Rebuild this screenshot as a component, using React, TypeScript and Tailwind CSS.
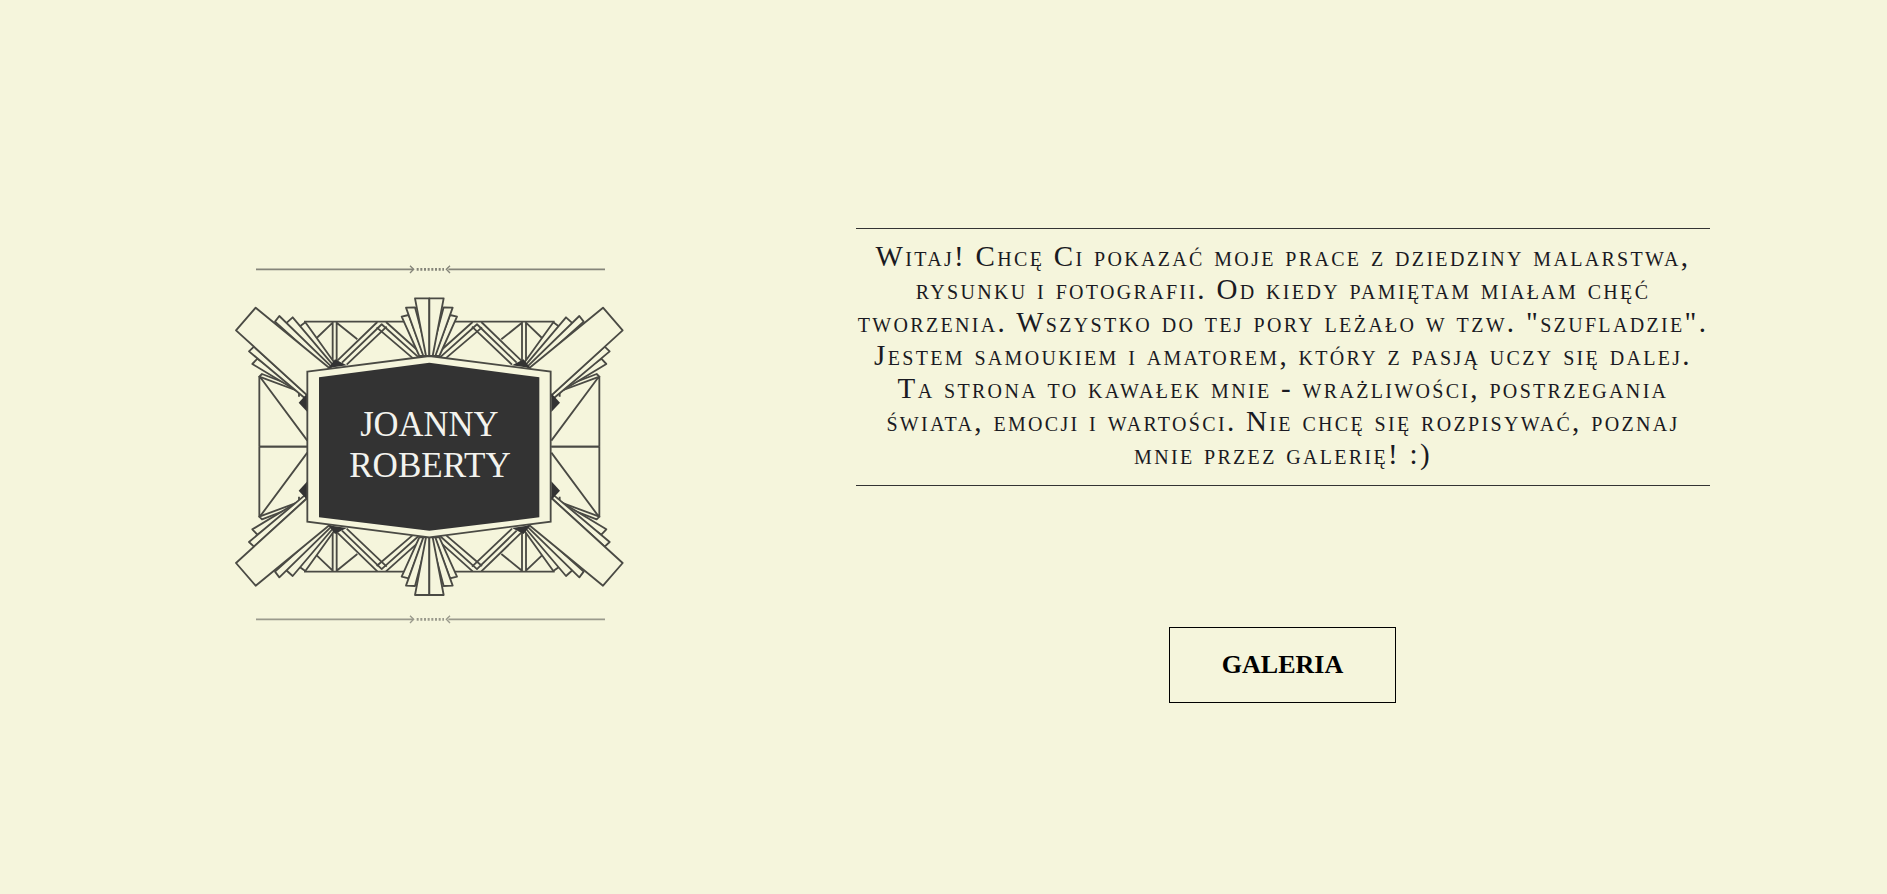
const BG = "#f5f5dc";
const INK = "#4a4a44";

const Blade = ({ points }: { points: string }) => (
  <polygon points={points} fill={BG} stroke={INK} strokeWidth={5.5} strokeLinejoin="round" />
);

const Line = ({ d, w = 5.5 }: { d: string; w?: number }) => (
  <path d={d} fill="none" stroke={INK} strokeWidth={w} strokeLinejoin="round" />
);

// one corner of the logo, mirrored three times below
const Quadrant = () => (
  <g>
    {/* outer frame */}
    <Line d="M252 215H628M118 378V590M118 590H262M118 378L262 572" />
    <Line d="M338 215V345M350 215V345M338 218L290 264M350 218L412 268" />

    {/* diagonal bundles */}
    <Line d="M352 332L472 216M366 338L486 222M380 344L500 230" />
    <Line d="M612 318L498 216M596 322L484 222M580 326L470 232" />

    {/* side stub */}
    <Line d="M237 340L330 328M237 340V440" />

    {/* centre fan */}
    <Blade points="545,200 566,195 612,318 598,318" />
    <Blade points="558,173 585,172 624,318 610,318" />
    <Blade points="585,145 628,145 628,318 618,318" />

    {/* upper fan */}
    <Blade points="238,230 256,217 346,342 334,348" />
    <Blade points="198,220 218,202 340,346 326,352" />
    <Blade points="165,215 178,198 334,350 322,356" />

    {/* lower fan */}
    <Blade points="118,380 126,372 262,424 258,432" />
    <Blade points="97,342 112,326 262,430 256,438" />
    <Blade points="87,304 102,290 262,436 254,444" />

    {/* big blade */}
    <Blade points="107,173 48,241 262,436 328,354" />

    {/* dark diamonds */}
    <polygon points="345,328 380,346 325,354" fill="#333333" />
    <polygon points="262,430 236,458 262,486" fill="#333333" />
  </g>
);

const Rule = ({ y, color }: { y: number; color: string }) => (
  <g stroke={color} fill="none">
    <path d={`M108 ${y}H580M685 ${y}H1155`} strokeWidth={5.5} />
    <path d={`M570 ${y - 11}L581 ${y}L570 ${y + 11}M690 ${y - 11}L679 ${y}L690 ${y + 11}`} strokeWidth={4} />
    <path d={`M590 ${y}H672`} strokeWidth={8} strokeDasharray="6 5" />
  </g>
);

const Logo = () => (
  <svg viewBox="0 0 1260 1140" className="block h-[380px] w-[420px] shrink-0 mb-[14px] ml-[4px]">
    <Rule y={58} color="#85857a" />
    <Rule y={1108} color="#9a9a8c" />
    <Quadrant />
    <g transform="matrix(-1 0 0 1 1256 0)">
      <Quadrant />
    </g>
    <g transform="matrix(1 0 0 -1 0 1180)">
      <Quadrant />
    </g>
    <g transform="matrix(-1 0 0 -1 1256 1180)">
      <Quadrant />
    </g>
    {/* plate */}
    <polygon
      points="262,365 628,318 992,365 992,815 628,862 262,815"
      fill={BG}
      stroke={INK}
      strokeWidth={5.5}
    />
    <polygon points="297,382 628,338 958,382 958,802 628,842 297,802" fill="#333333" />
    <text
      x={628}
      y={558}
      textAnchor="middle"
      textLength={415}
      lengthAdjust="spacingAndGlyphs"
      fill="#f3f3ee"
      fontSize={110}
      fontFamily="'Liberation Serif', serif"
    >
      JOANNY
    </text>
    <text
      x={630}
      y={682}
      textAnchor="middle"
      textLength={485}
      lengthAdjust="spacingAndGlyphs"
      fill="#f3f3ee"
      fontSize={110}
      fontFamily="'Liberation Serif', serif"
    >
      ROBERTY
    </text>
  </svg>
);

export default function App() {
  return (
    <div className="flex h-[894px] w-full items-center overflow-hidden bg-[#f5f5dc] font-['Liberation_Serif',serif]">
      <div className="flex w-[856px] shrink-0 justify-center">
        <Logo />
      </div>
      <div className="flex w-[854px] shrink-0 flex-col items-center pt-[37px]">
        <p className="w-full border-y border-[#333333] pt-[11px] pb-[14px] text-center text-[29px] leading-[33px] tracking-[2.32px] text-[#1a1a22] [font-variant:small-caps]">
          Witaj! Chcę Ci pokazać moje prace z dziedziny malarstwa,
          <br />
          rysunku i fotografii. Od kiedy pamiętam miałam chęć
          <br />
          tworzenia. Wszystko do tej pory leżało w tzw. "szufladzie".
          <br />
          Jestem samoukiem i amatorem, który z pasją uczy się dalej.
          <br />
          Ta strona to kawałek mnie - wrażliwości, postrzegania
          <br />
          świata, emocji i wartości. Nie chcę się rozpisywać, poznaj
          <br />
          mnie przez galerię! :)
        </p>
        <button className="mt-[141px] -ml-[1px] flex h-[76px] w-[227px] items-center justify-center border border-black pb-[2px] text-[26px] font-bold text-black">
          GALERIA
        </button>
      </div>
    </div>
  );
}
